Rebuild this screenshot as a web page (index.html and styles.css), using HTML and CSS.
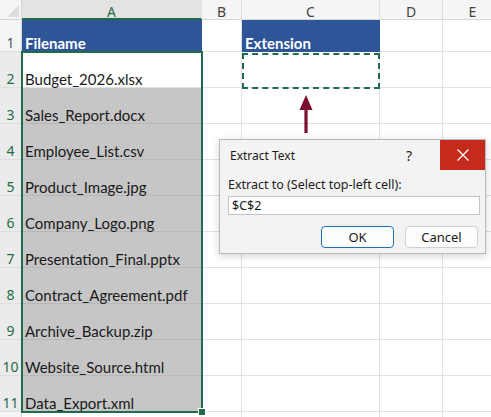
FILE: index.html
```html
<!DOCTYPE html>
<html lang="en">
<head>
    <meta charset="UTF-8">
    <title>Extract Text</title>
    <link rel="stylesheet" href="styles.css">
</head>
<body>
    <div class="sheet">
        <div class="corner"><span class="tri"></span></div>
        <div class="col-head sel">A</div>
        <div class="col-head">B</div>
        <div class="col-head">C</div>
        <div class="col-head">D</div>
        <div class="col-head">E</div>

        <div class="row-head">1</div>
        <div class="cell title">Filename</div>
        <div class="cell"></div>
        <div class="cell title">Extension</div>
        <div class="cell"></div>
        <div class="cell"></div>

        <div class="row-head sel">2</div>
        <div class="cell">Budget_2026.xlsx</div>
        <div class="cell"></div><div class="cell"></div><div class="cell"></div><div class="cell"></div>

        <div class="row-head sel">3</div>
        <div class="cell hl">Sales_Report.docx</div>
        <div class="cell"></div><div class="cell"></div><div class="cell"></div><div class="cell"></div>

        <div class="row-head sel">4</div>
        <div class="cell hl">Employee_List.csv</div>
        <div class="cell"></div><div class="cell"></div><div class="cell"></div><div class="cell"></div>

        <div class="row-head sel">5</div>
        <div class="cell hl">Product_Image.jpg</div>
        <div class="cell"></div><div class="cell"></div><div class="cell"></div><div class="cell"></div>

        <div class="row-head sel">6</div>
        <div class="cell hl">Company_Logo.png</div>
        <div class="cell"></div><div class="cell"></div><div class="cell"></div><div class="cell"></div>

        <div class="row-head sel">7</div>
        <div class="cell hl">Presentation_Final.pptx</div>
        <div class="cell"></div><div class="cell"></div><div class="cell"></div><div class="cell"></div>

        <div class="row-head sel">8</div>
        <div class="cell hl">Contract_Agreement.pdf</div>
        <div class="cell"></div><div class="cell"></div><div class="cell"></div><div class="cell"></div>

        <div class="row-head sel">9</div>
        <div class="cell hl">Archive_Backup.zip</div>
        <div class="cell"></div><div class="cell"></div><div class="cell"></div><div class="cell"></div>

        <div class="row-head sel">10</div>
        <div class="cell hl">Website_Source.html</div>
        <div class="cell"></div><div class="cell"></div><div class="cell"></div><div class="cell"></div>

        <div class="row-head sel">11</div>
        <div class="cell hl">Data_Export.xml</div>
        <div class="cell"></div><div class="cell"></div><div class="cell"></div><div class="cell"></div>

        <div class="row-head"></div>
        <div class="cell"></div><div class="cell"></div><div class="cell"></div><div class="cell"></div><div class="cell"></div>

        <!-- selection A2:A11 and copy target C2 -->
        <div class="range"><span class="handle"></span></div>
        <div class="marquee"></div>

        <svg class="arrow" width="16" height="40" viewBox="0 0 16 40">
            <path d="M8 0 L14.5 15 L9.6 15 L9.6 38 L6.4 38 L6.4 15 L1.5 15 Z" fill="#7c0f2e"/>
        </svg>

        <div class="dialog">
            <div class="dialog-bar">
                <span class="dialog-title">Extract Text</span>
                <span class="help">?</span>
                <span class="close">
                    <svg width="14" height="14" viewBox="0 0 14 14">
                        <path d="M1.5 1.5 L12.5 12.5 M12.5 1.5 L1.5 12.5" stroke="#fff" stroke-width="1.3"/>
                    </svg>
                </span>
            </div>
            <div class="dialog-body">
                <label class="field-label">Extract to (Select top-left cell):</label>
                <div class="field">$C$2</div>
                <div class="buttons">
                    <button class="btn primary">OK</button>
                    <button class="btn">Cancel</button>
                </div>
            </div>
        </div>
    </div>
</body>
</html>
```

FILE: styles.css
```css
body {
    margin: 0;
    background: #fff;
    font-family: "Noto Sans", "Open Sans", sans-serif;
    overflow: hidden;
}
.sheet {
    position: relative;
    display: grid;
    grid-template-columns: 22px 180px 40px 138px 63px 60px;
    grid-template-rows: 20px 32px repeat(10, 36px) 20px;
    width: 503px;
}
.corner {
    position: relative;
    background: #f5f5f5;
    border-right: 1px solid #d6d6d6;
    border-bottom: 1px solid #d6d6d6;
}
.tri {
    position: absolute;
    right: 2px;
    bottom: 2px;
    border-left: 12px solid transparent;
    border-bottom: 12px solid #dcdcdc;
}
.col-head {
    background: #f5f5f5;
    color: #444;
    font-size: 14px;
    text-align: center;
    line-height: 23px;
    border-right: 1px solid #dedede;
    border-bottom: 1px solid #d6d6d6;
}
.col-head.sel {
    background: #e3e3e3;
    color: #1f6b46;
    border-bottom: 2px solid #1f6b46;
    line-height: 24px;
}
.row-head {
    background: #f5f5f5;
    color: #555;
    font-size: 14px;
    display: flex;
    align-items: flex-end;
    justify-content: center;
    line-height: 16px;
    border-right: 1px solid #d6d6d6;
    border-bottom: 1px solid #dedede;
}
.row-head.sel {
    background: #ebebeb;
    color: #1f6b46;
}
.cell {
    font-family: Lato, "Noto Sans", sans-serif;
    font-size: 15px;
    color: #1a1a1a;
    display: flex;
    align-items: flex-end;
    padding: 0 0 0 3px;
    border-right: 1px solid #e1e1e1;
    border-bottom: 1px solid #e1e1e1;
    white-space: nowrap;
    line-height: 16px;
}
.cell.title {
    background: #2e5597;
    color: #fff;
    font-weight: bold;
    border-color: #2e5597;
}
.cell.hl {
    background: #c6c6c6;
    border-bottom-color: #b8b8b8;
}
.range {
    position: absolute;
    left: 21px;
    top: 51px;
    width: 182px;
    height: 362px;
    border: 2px solid #1f6b4a;
    box-sizing: border-box;
}
.handle {
    position: absolute;
    right: -5px;
    bottom: -5px;
    width: 6px;
    height: 6px;
    background: #1f6b4a;
    border: 1px solid #fff;
}
.marquee {
    position: absolute;
    left: 242px;
    top: 53px;
    width: 138px;
    height: 36px;
    border: 2px dashed #1f6b4a;
    box-sizing: border-box;
}
.arrow {
    position: absolute;
    left: 298px;
    top: 95px;
}
.dialog {
    position: absolute;
    left: 219px;
    top: 139px;
    width: 267px;
    height: 115px;
    box-sizing: border-box;
    background: #f3f3f3;
    border: 1px solid #b9b9b9;
    box-shadow: 0 2px 8px rgba(0,0,0,0.18);
    font-size: 12.5px;
    color: #1a1a1a;
    display: flex;
    flex-direction: column;
}
.dialog-bar {
    height: 30px;
    display: flex;
    align-items: center;
}
.dialog-title {
    flex: 1;
    padding-left: 10px;
    font-size: 12px;
}
.help {
    width: 24px;
    margin-right: 19px;
    text-align: center;
    font-size: 14px;
}
.close {
    width: 45px;
    height: 30px;
    background: #c42b1c;
    display: flex;
    align-items: center;
    justify-content: center;
}
.dialog-body {
    padding: 6px 6px 0 8px;
    display: flex;
    flex-direction: column;
}
.field-label {
    line-height: 17px;
}
.field {
    margin-top: 3px;
    height: 19px;
    box-sizing: border-box;
    background: #fff;
    border: 1px solid #c4c4c4;
    padding: 0 3px;
    line-height: 17px;
    width: 252px;
}
.buttons {
    display: flex;
    justify-content: flex-end;
    gap: 11px;
    margin-top: 11px;
    padding-right: 1px;
}
.btn {
    width: 73px;
    height: 22px;
    font: inherit;
    font-size: 13px;
    color: #1a1a1a;
    background: #fdfdfd;
    border: 1px solid #d0d0d0;
    border-radius: 4px;
    padding: 0;
}
.btn.primary {
    border: 1.5px solid #1f6fb5;
}
```
